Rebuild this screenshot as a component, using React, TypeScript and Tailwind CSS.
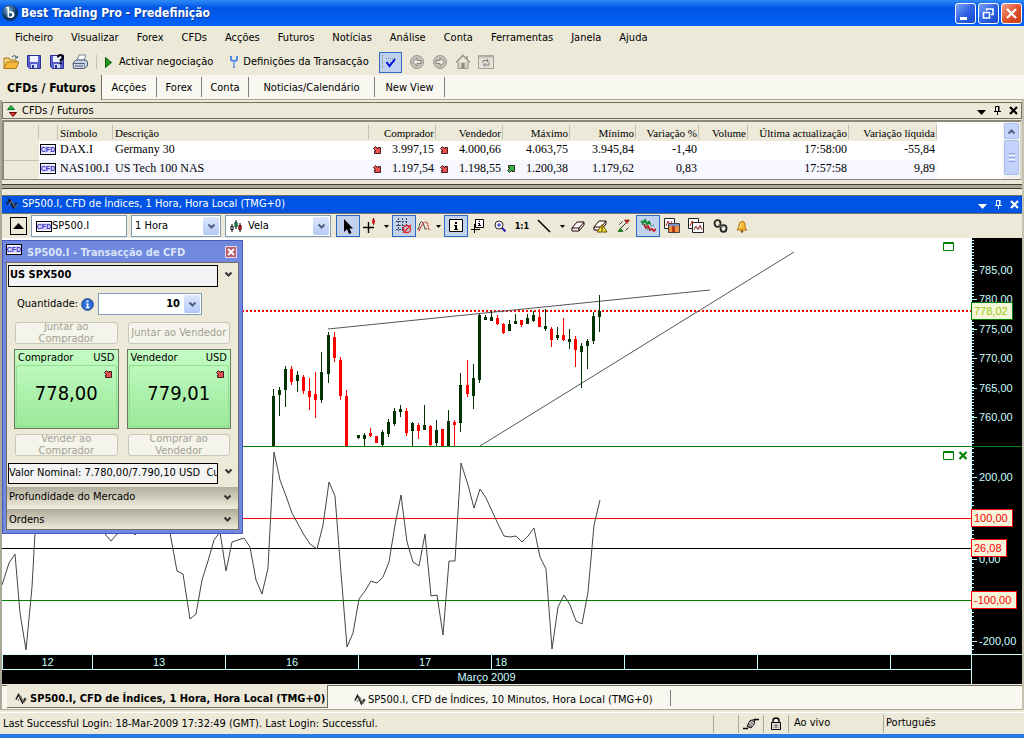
import type { ReactNode } from "react";

const MENU = ["Ficheiro", "Visualizar", "Forex", "CFDs", "Acções", "Futuros", "Notícias", "Análise", "Conta", "Ferramentas", "Janela", "Ajuda"];

const VIEWS = [
  { label: "Acções", width: "w-[55px]" },
  { label: "Forex", width: "w-[45px]" },
  { label: "Conta", width: "w-[47px]" },
  { label: "Noticias/Calendário", width: "w-[126px]" },
  { label: "New View", width: "w-[70px]" },
];

type Quote = { symbol: string; name: string; values: string[]; dirs: string[] };

const COLUMNS = [
  { label: "", width: "w-[35px]" },
  { label: "", width: "w-[19px]" },
  { label: "Símbolo", width: "w-[55px]" },
  { label: "Descrição", width: "w-[256px]" },
  { label: "Comprador", width: "w-[67px]" },
  { label: "Vendedor", width: "w-[67px]" },
  { label: "Máximo", width: "w-[67px]" },
  { label: "Mínimo", width: "w-[66px]" },
  { label: "Variação %", width: "w-[63px]" },
  { label: "Volume", width: "w-[49px]" },
  { label: "Última actualização", width: "w-[101px]" },
  { label: "Variação líquida", width: "w-[88px]" },
];

const QUOTES: Quote[] = [
  {
    symbol: "DAX.I",
    name: "Germany 30",
    values: ["3.997,15", "4.000,66", "4.063,75", "3.945,84", "-1,40", "", "17:58:00", "-55,84"],
    dirs: ["down", "down"],
  },
  {
    symbol: "NAS100.I",
    name: "US Tech 100 NAS",
    values: ["1.197,54", "1.198,55", "1.200,38", "1.179,62", "0,83", "", "17:57:58", "9,89"],
    dirs: ["down", "down", "up"],
  },
];

// x, body top, body bottom, wick top, wick bottom, rising
const CANDLES: [number, number, number, number, number, number][] = [
  [271, 158, 208, 151, 208, 1], [277, 152, 157, 149, 178, 1], [283, 131, 152, 128, 169, 1], [289, 131, 144, 128, 147, 0],
  [295, 137, 143, 133, 154, 1], [301, 139, 153, 137, 156, 0], [307, 153, 159, 140, 172, 0], [313, 156, 162, 134, 180, 0],
  [319, 134, 162, 114, 165, 1], [326, 97, 136, 94, 145, 1], [332, 99, 120, 94, 124, 0], [338, 122, 158, 119, 162, 0],
  [344, 158, 208, 152, 208, 0], [356, 197, 200, 197, 201, 1], [362, 197, 201, 195, 208, 1], [368, 195, 198, 190, 199, 0],
  [374, 198, 205, 198, 205, 0], [380, 194, 207, 192, 208, 1], [386, 184, 196, 181, 199, 1], [392, 173, 186, 170, 188, 1],
  [398, 171, 174, 167, 179, 1], [404, 173, 195, 170, 198, 0], [410, 185, 193, 184, 208, 1], [416, 187, 193, 185, 201, 0],
  [422, 187, 192, 167, 192, 1], [428, 188, 207, 187, 208, 0], [434, 192, 205, 182, 208, 1], [440, 191, 208, 191, 208, 0],
  [446, 183, 208, 172, 208, 1], [452, 184, 187, 182, 208, 0], [458, 147, 185, 135, 194, 1], [465, 147, 156, 122, 159, 0],
  [471, 140, 158, 126, 171, 1], [477, 77, 142, 76, 145, 1], [483, 79, 82, 77, 82, 1], [489, 79, 83, 73, 83, 1],
  [495, 80, 86, 77, 87, 0], [501, 86, 95, 85, 96, 0], [507, 86, 93, 82, 93, 1], [513, 83, 86, 76, 86, 1],
  [519, 82, 87, 82, 89, 0], [525, 80, 86, 76, 86, 1], [531, 77, 83, 73, 84, 1], [537, 79, 89, 71, 89, 0],
  [543, 88, 91, 71, 93, 1], [549, 91, 102, 89, 109, 0], [555, 97, 100, 89, 102, 1], [561, 97, 102, 80, 103, 0],
  [567, 101, 104, 91, 111, 1], [573, 101, 112, 98, 129, 0], [579, 108, 114, 105, 150, 1], [585, 103, 108, 101, 131, 1],
  [591, 78, 103, 74, 106, 1], [597, 73, 79, 57, 94, 1],
];

const OSCILLATOR =
  "0,138 7,116 13,107 18,166 24,203 30,140 33,86 39,60 97,74 103,87 109,94 115,87 127,80 133,88 139,80 168,86 175,124 181,127 188,172 194,167 200,133 206,114 212,93 218,85 224,124 230,95 242,91 248,100 254,133 260,147 266,121 272,5 278,33 284,49 290,66 296,77 302,88 308,97 315,102 321,78 327,35 333,49 339,126 345,200 351,186 357,152 363,144 369,134 375,136 381,130 387,115 393,78 399,48 405,95 411,115 417,119 423,87 429,149 435,148 441,188 447,114 453,114 459,16 466,38 472,61 478,42 484,51 490,64 496,77 502,89 508,90 514,89 520,95 526,89 532,81 538,110 544,122 550,202 556,160 562,148 568,158 574,174 580,177 586,145 592,78 598,53";

const DAYS = [
  { label: "12", cell: "w-[90px] justify-center" },
  { label: "13", cell: "w-[133px] justify-center" },
  { label: "16", cell: "w-[133px] justify-center" },
  { label: "17", cell: "w-[133px] justify-center" },
  { label: "18", cell: "w-[133px] pl-[3px]" },
  { label: "", cell: "w-[133px]" },
  { label: "", cell: "w-[133px]" },
  { label: "", cell: "flex-1" },
];

/* ── Small icons ── */

function Icon({ w = 16, h = 16, children }: { w?: number; h?: number; children: ReactNode }) {
  return (
    <svg width={w} height={h} viewBox={`0 0 ${w} ${h}`} className="shrink-0" aria-hidden="true">
      {children}
    </svg>
  );
}

function DirArrow({ dir }: { dir: string }) {
  return (
    <Icon w={8} h={8}>
      <g transform={dir === "up" ? "matrix(1 0 0 -1 0 8)" : undefined}>
        <path d="M.5 2.500l2-2L5 3V1.500h2.500v6h-6V5H3z" fill={dir === "up" ? "#2fbe4a" : "#f05050"} stroke="#301010" strokeWidth=".9" />
      </g>
    </Icon>
  );
}

function CfdBadge() {
  return (
    <span className="flex h-[11px] w-4 shrink-0 items-center justify-center border border-black bg-white">
      <span className="bg-[#dcdcff] font-[family-name:'Liberation_Sans',sans-serif] text-[7px] leading-[7px] font-bold text-[#3b32c8]">CFD</span>
    </span>
  );
}

function WaveIcon() {
  return (
    <Icon w={12} h={12}>
      <path d="M1 6.500L3.500 1.500l4 8.500L10.500 5" fill="none" stroke="#1a1a1a" strokeWidth="1.500" />
      <path d="M3 8l2.500-5M5.500 2.500l3.500 7L11.500 6" fill="none" stroke="#6a6a6a" strokeWidth="1" />
    </Icon>
  );
}

function Chevron({ color = "#333" }: { color?: string }) {
  return (
    <Icon w={9} h={7}>
      <path d="M1.500 1.500l3 3 3-3" fill="none" stroke={color} strokeWidth="2" />
    </Icon>
  );
}

function PanelButtons() {
  return (
    <div className="flex items-center gap-2">
      <button type="button" aria-label="Menu" className="pt-1">
        <Icon w={9} h={5}><path d="M0 0h9L4.500 5z" fill="currentColor" /></Icon>
      </button>
      <button type="button" aria-label="Fixar">
        <Icon w={7} h={9}><path d="M1.500 5V.5h3V5M5 0v5.500M0 5.500h7M3.500 6v3" fill="none" stroke="currentColor" /></Icon>
      </button>
      <button type="button" aria-label="Fechar">
        <Icon w={9} h={9}><path d="M1 1l7 7M8 1L1 8" fill="none" stroke="currentColor" strokeWidth="2.200" /></Icon>
      </button>
    </div>
  );
}

function DropArrow() {
  return (
    <span className="flex h-[18px] w-4 items-center justify-center rounded-[2px] bg-linear-to-b from-[#dde7fd] to-[#b5c9f6]">
      <Chevron color="#4d6185" />
    </span>
  );
}

/* ── Title bar ── */

function TitleBar() {
  return (
    <header className="flex h-[26px] items-center bg-linear-to-b from-[#2f8bf7] via-[#0055e5] via-30% to-[#0462fb] pr-0.5 pl-px">
      <Icon w={18} h={18}>
        <defs>
          <radialGradient id="orb" cx="40%" cy="30%">
            <stop offset="0" stopColor="#7fb0d8" />
            <stop offset="1" stopColor="#06345f" />
          </radialGradient>
        </defs>
        <circle cx="9" cy="9" r="8" fill="url(#orb)" />
        <path d="M5 3h3v4.500c3-1 5.500.3 5.500 3 0 3-3.500 4.500-7 2.500V4.500H5zM8 9v3.500c2 .4 3.300-.4 3.300-2S9.700 8.200 8 9z" fill="#fff" fillRule="evenodd" />
      </Icon>
      <h1 className="ml-0.5 flex-1 text-[12px] font-bold text-white [text-shadow:1px_1px_#0a3a9c]">Best Trading Pro - Predefinição</h1>
      <div className="flex gap-0.5">
        <button type="button" aria-label="Minimizar" className="size-[21px] rounded-[3px] border border-white bg-linear-to-br from-[#7ea2f4] via-[#2f63e6] to-[#1848c8]">
          <Icon w={19} h={19}><path d="M4 13h7v3H4z" fill="#fff" /></Icon>
        </button>
        <button type="button" aria-label="Restaurar" className="size-[21px] rounded-[3px] border border-white bg-linear-to-br from-[#7ea2f4] via-[#2f63e6] to-[#1848c8]">
          <Icon w={19} h={19}><path d="M4.500 8.500h6v5.500h-6zM4 8.500h7M7.500 6.500V5h6.500v5.500H12M7 5h7.500" fill="none" stroke="#fff" strokeWidth="1.500" /></Icon>
        </button>
        <button type="button" aria-label="Fechar janela" className="size-[21px] rounded-[3px] border border-white bg-linear-to-br from-[#f0a088] via-[#e0532e] to-[#c83a10]">
          <Icon w={19} h={19}><path d="M5 5l9 9M14 5l-9 9" stroke="#fff" strokeWidth="2.400" /></Icon>
        </button>
      </div>
    </header>
  );
}

/* ── Main toolbar ── */

function Floppy({ help }: { help?: boolean }) {
  return (
    <Icon>
      <path d="M1.500 1.500h13v13h-11l-2-2z" fill="#5a62d0" stroke="#2b3399" />
      <path d="M4 2h8v6H4z" fill="#f2f4ff" />
      <path d="M5 10h6v4H5z" fill="#d8dcf4" />
      <path d="M6 11h2v3H6z" fill="#2b3399" />
      {help && <path d="M9 3.500Q9 1 11.500 1T14 3.500Q14 5 11.700 6v1.500M11.700 8.500v1.800" fill="none" stroke="#000" strokeWidth="2" />}
    </Icon>
  );
}

function MainToolbar() {
  return (
    <div className="flex h-[25px] items-center pb-px pl-[3px]">
      <button type="button" aria-label="Abrir" className="mr-[7px]">
        <Icon>
          <path d="M1 14V4h5l1 2h6v2" fill="#f8d878" stroke="#a8751a" />
          <path d="M1 14.500L4 8h12l-3 6.500z" fill="#fbb83a" stroke="#a8751a" />
          <path d="M9 3q3-3 5 1l1-2M14 4l-2-.3" fill="none" stroke="#34506e" />
        </Icon>
      </button>
      <button type="button" aria-label="Guardar" className="mr-[7px]"><Floppy /></button>
      <button type="button" aria-label="Guardar como" className="mr-[7px]"><Floppy help /></button>
      <button type="button" aria-label="Imprimir">
        <Icon>
          <path d="M5 6l2-5h7l-2 5z" fill="#fff" stroke="#7a869a" />
          <path d="M1 9l3-3h10l1.500 2v4L12 14.500H1.500z" fill="#c9d3e2" stroke="#51607a" />
          <path d="M1.500 9.500h11M3 12h8" stroke="#51607a" />
          <path d="M12.500 9.500V14" stroke="#8492aa" />
        </Icon>
      </button>
      <span className="mx-2 h-[14px] w-px bg-[#c5c2b2]" />
      <button type="button" className="flex items-center gap-[7px]">
        <Icon w={7} h={11}><path d="M.5.500v10l6-5z" fill="#1f9a1f" stroke="#0c5a0c" /></Icon>
        Activar negociação
      </button>
      <button type="button" className="ml-4 flex items-center gap-1">
        <Icon w={10} h={12}>
          <path d="M2 0v3q0 2 3 2t3-2V0M5 5v7" fill="none" stroke="#4f86e0" strokeWidth="2" />
          <path d="M5 5.500V11" stroke="#b8d0f8" />
        </Icon>
        Definições da Transacção
      </button>
      <button type="button" aria-label="Confirmar" className="ml-2.5 flex h-[21px] w-[23px] items-center justify-center border border-[#316ac5] bg-[#c1d2ee]">
        <Icon>
          <path d="M.5 1v14M4 4.500h10M8 8h6" stroke="#7d8797" strokeDasharray="1 1" />
          <path d="M4.500 8l3 4 5.500-7" fill="none" stroke="#0010e0" strokeWidth="2" />
        </Icon>
      </button>
      <button type="button" aria-label="Anterior" className="ml-[7px]">
        <Icon>
          <circle cx="8" cy="8" r="6.500" fill="#c4c2b9" stroke="#99978d" />
          <path d="M3.500 8L8 4v2.500h4v3H8V12z" fill="#e9e7de" stroke="#77756c" strokeWidth=".8" />
        </Icon>
      </button>
      <button type="button" aria-label="Seguinte" className="ml-[7px]">
        <Icon>
          <circle cx="8" cy="8" r="6.500" fill="#c4c2b9" stroke="#99978d" />
          <path d="M12.500 8L8 4v2.500H4v3h4V12z" fill="#e9e7de" stroke="#77756c" strokeWidth=".8" />
        </Icon>
      </button>
      <button type="button" aria-label="Início" className="ml-[7px]">
        <Icon>
          <path d="M3 8v6.500h10V8" fill="#d5d3c9" stroke="#9a988e" />
          <path d="M1 8.500L8 1.500l7 7M12 2v4" fill="none" stroke="#9a988e" strokeWidth="1.600" />
          <path d="M6.500 9h3v5h-3z" fill="#8d8b81" />
        </Icon>
      </button>
      <button type="button" aria-label="Actualizar" className="ml-[7px]">
        <Icon>
          <path d="M.5 1.500h15v13H.5z" fill="#e4e2d8" stroke="#a3a197" />
          <path d="M1 2.500h14" stroke="#b6b4aa" strokeWidth="2" />
          <path d="M5 9V6.500h5M8.500 4.500l2 2-2 2M11 8v3H6M7.500 9l-2 2 2 2" fill="none" stroke="#85837a" />
        </Icon>
      </button>
    </div>
  );
}

function ViewTabs() {
  return (
    <nav className="flex h-[25px] items-stretch border-b border-[#aca899] bg-[#f8f7f0]">
      <button type="button" className="-mb-px w-[102px] border-r border-[#716f64] bg-[#ece9d8] pl-[7px] text-left text-[12px] font-bold whitespace-nowrap">CFDs / Futuros</button>
      {VIEWS.map((v) => (
        <div key={v.label} className="flex py-0.5">
          <button type="button" className={`${v.width} border-r border-[#808080] pt-0.5 text-center`}>{v.label}</button>
        </div>
      ))}
    </nav>
  );
}

/* ── Quotes panel ── */

function QuotesPanel() {
  return (
    <section>
      <div className="flex h-[17px] items-center justify-between border border-[#716f64] pr-[3px] pl-1">
        <h2 className="flex items-center gap-[5px]">
          <Icon w={10} h={12}>
            <path d="M4 .500L.5 4.500h7z" fill="#23c423" stroke="#063" />
            <path d="M6 11.500l3.500-4h-7z" fill="#e83030" stroke="#600" />
          </Icon>
          CFDs / Futuros
        </h2>
        <PanelButtons />
      </div>
      <div className="mt-px flex h-[60px] overflow-hidden border-2 border-b border-[#8a877b] border-r-[#d8d5c6] bg-white">
        <div className="flex-1 overflow-hidden font-[family-name:'Liberation_Serif',serif] text-[12px]">
          <table className="table-fixed border-collapse leading-[17px]">
            <thead>
              <tr className="h-[19px] bg-[#ece9d8] text-[11px]">
                {COLUMNS.map((c, i) => (
                  <th key={i} className={`${c.width} overflow-hidden p-0 font-normal whitespace-nowrap ${i > 3 ? "text-right" : "text-left"}`}>
                    <div className={`h-[14px] border-r border-[#c5c2b2] pr-px leading-[16px] ${i === 2 || i === 3 ? "pl-0.5" : ""}`}>{c.label}</div>
                  </th>
                ))}
              </tr>
            </thead>
            <tbody>
              {QUOTES.map((q) => (
                <tr key={q.symbol} className="h-[19px] even:bg-[#f7f7ff]">
                  <td className="border-b border-[#c5c2b2] bg-[#ece9d8] p-0" />
                  <td className="pt-0 pr-0 pb-0.5 pl-px"><CfdBadge /></td>
                  <td className="pt-0 pr-0 pb-0.5 pl-0.5 whitespace-nowrap">{q.symbol}</td>
                  <td className="pt-0 pr-0 pb-0.5 pl-0.5">{q.name}</td>
                  {q.values.map((v, i) => (
                    <td key={i} className="pt-0 pr-0.5 pb-0.5 pl-1">
                      <div className="flex items-center justify-between">
                        {q.dirs[i] ? <DirArrow dir={q.dirs[i]} /> : <span />}
                        {v}
                      </div>
                    </td>
                  ))}
                </tr>
              ))}
            </tbody>
          </table>
        </div>
        <div className="flex w-[17px] flex-col gap-px bg-[#f2f2ee] p-px">
          <button type="button" aria-label="Subir" className="flex h-4 items-center justify-center rounded-[2px] border border-[#a9bdf0] bg-[#c6d5fb]">
            <span className="rotate-180"><Chevron color="#4d6185" /></span>
          </button>
          <div className="flex h-[35px] flex-col items-center justify-center gap-px rounded-[2px] border border-[#a9bdf0] bg-[#c2d2fb]">
            <span className="h-px w-1.5 bg-[#8da6ea]" />
            <span className="h-px w-1.5 bg-[#f5f8ff]" />
            <span className="h-px w-1.5 bg-[#8da6ea]" />
            <span className="h-px w-1.5 bg-[#f5f8ff]" />
            <span className="h-px w-1.5 bg-[#8da6ea]" />
          </div>
        </div>
      </div>
      <div className="mt-1 h-[5px] border-y border-[#3f3d36] bg-[#aca899]" />
    </section>
  );
}

/* ── Chart toolbar ── */

function Tool({ label, width = "w-6", on, children }: { label: string; width?: string; on?: boolean; children: ReactNode }) {
  return (
    <button
      type="button"
      aria-label={label}
      className={`${width} flex h-[22px] shrink-0 items-center justify-center ${on ? "border border-[#316ac5] bg-[#c1d2ee]" : ""}`}
    >
      {children}
    </button>
  );
}

function Drop({ label }: { label: string }) {
  return (
    <Tool label={label} width="w-3">
      <Icon w={5} h={3}><path d="M0 0h5L2.500 3z" /></Icon>
    </Tool>
  );
}

function ChartToolbar() {
  return (
    <div className="flex h-[25px] items-center border-t border-[#716f64] pl-2">
      <button type="button" aria-label="Recolher" className="mr-1 flex h-[18px] w-[17px] items-center justify-center border border-black">
        <Icon w={11} h={6}><path d="M0 6h11L5.500 0z" /></Icon>
      </button>
      <label className="mr-1 flex h-[22px] w-24 items-center border border-[#7f9db9] bg-white pl-1">
        <CfdBadge />
        <input aria-label="Símbolo" defaultValue="SP500.I" className="w-full min-w-0 outline-none" />
      </label>
      <label className="mr-1 flex h-[22px] w-[90px] items-center border border-[#7f9db9] bg-white pr-px pl-[3px]">
        <select aria-label="Período" className="min-w-0 flex-1 appearance-none outline-none">
          <option>1 Hora</option>
        </select>
        <DropArrow />
      </label>
      <label className="mr-[5px] flex h-[22px] w-[106px] items-center border border-[#7f9db9] bg-white pr-px pl-1">
        <Icon w={12} h={14}>
          <path d="M2 5v8M6 1v9M10 4v9" stroke="#000" />
          <path d="M.9 7.500h2.200v3H.9z" fill="#fff" stroke="#000" />
          <path d="M4.900 3.500h2.200v4H4.900z" fill="#2fb02f" stroke="#043" />
          <path d="M8.900 6.500h2.200v4H8.900z" fill="#e02020" stroke="#500" />
        </Icon>
        <select aria-label="Tipo de gráfico" className="ml-1.5 min-w-0 flex-1 appearance-none outline-none">
          <option>Vela</option>
        </select>
        <DropArrow />
      </label>

      <Tool label="Cursor" on>
        <Icon><path d="M4 1v13l3-3 2 5 2.500-1-2-4.500H13z" /></Icon>
      </Tool>
      <Tool label="Mira" width="w-5">
        <Icon>
          <path d="M6.500 4v11M1 9.500h11" stroke="#000" strokeWidth="1.400" />
          <path d="M11.500 0v7" stroke="#600" />
          <path d="M10 1.500h3v4h-3z" fill="#d22" />
        </Icon>
      </Tool>
      <Drop label="Opções da mira" />
      <Tool label="Grelha" on>
        <Icon>
          <path d="M0 3.500h12M0 7.500h12M0 11.500h7M2.500 0v13M6.500 0v13M10.500 0v8" stroke="#445" strokeDasharray="2 1" />
          <circle cx="11" cy="11" r="3.500" fill="none" stroke="#e02020" strokeWidth="1.300" />
          <path d="M7 15l8-8" stroke="#e02020" strokeWidth="1.300" />
        </Icon>
      </Tool>
      <Tool label="Indicadores" width="w-4">
        <Icon w={14} h={12}>
          <path d="M0 9h1.500Q3 1.500 4.500 1.500T8 9h2" fill="none" stroke="#333" strokeWidth=".9" />
          <path d="M2 11q4-9 6.500-9t3 7l2 1" fill="none" stroke="#c22" strokeWidth="1.100" strokeDasharray="2 .6" />
        </Icon>
      </Tool>
      <Drop label="Opções dos indicadores" />
      <Tool label="Informação" on>
        <Icon>
          <path d="M1.500 1.500h13v12h-13z" fill="#fffbe8" stroke="#000" />
          <path d="M7 4h2v2H7zM6 7h3v4h1v1H6v-1h1V8H6z" />
        </Icon>
      </Tool>
      <Tool label="Informação da mira" width="w-5">
        <Icon w={14} h={14}>
          <path d="M3.500 5v9M0 10.500h9" stroke="#000" />
          <path d="M4.500.5h8v8h-8z" fill="#fff" stroke="#000" />
          <path d="M8 2h1v1H8zM7 4h2v2h1v1H7V6h1V5H7z" />
        </Icon>
      </Tool>
      <Tool label="Ampliar">
        <Icon w={12} h={12}>
          <circle cx="5" cy="5" r="4" fill="#fff" stroke="#222" />
          <path d="M3 5h4M5 3v4" stroke="#22c" />
          <path d="M8 8l3.500 3.500" stroke="#22a" strokeWidth="2" />
        </Icon>
      </Tool>
      <Tool label="Tamanho real" width="w-5"><span className="text-[9px] font-bold">1:1</span></Tool>
      <Tool label="Linha">
        <Icon><path d="M2 2l12 12" stroke="#000" strokeWidth="1.500" /></Icon>
      </Tool>
      <Drop label="Opções da linha" />
      <Tool label="Apagar" width="w-5">
        <Icon w={14} h={12}>
          <path d="M1 8l5-6h7l-5 6zM1 8v3h7V8M8 11l5-6V2" fill="#fff" stroke="#200" />
        </Icon>
      </Tool>
      <Tool label="Apagar tudo">
        <Icon w={15} h={14}>
          <path d="M1 8l5-6h7l-5 6zM1 8v3h7V8M8 11l5-6V2" fill="#fff" stroke="#200" />
          <path d="M9 5.500l5 7.500H4z" fill="#ffe93b" stroke="#665500" />
          <path d="M9 7.500v3M9 11v1.200" stroke="#000" />
        </Icon>
      </Tool>
      <Tool label="Extremos">
        <Icon w={14} h={14}>
          <path d="M4 9l5-5M2.500 5.500l3-3M8.500 11.500l3-3" stroke="#333" />
          <path d="M7.500 1h5L10 4.500z" fill="#e02020" stroke="#600" strokeWidth=".6" />
          <path d="M1 12.500h5L3.500 9z" fill="#1f9a1f" stroke="#040" strokeWidth=".6" />
        </Icon>
      </Tool>
      <Tool label="Comparar" on>
        <Icon>
          <path d="M1 3l2 2 2-3 2 4 2-2 1 2" fill="none" stroke="#0a8a2a" strokeWidth="1.800" />
          <path d="M4 6l2 4 2-2 2 4 2-1 2 2 2-2" fill="none" stroke="#c22" strokeWidth="1.800" />
          <path d="M2 6l3 1 3 5 3-1M9 3l2 5 3-1" fill="none" stroke="#163" strokeDasharray="1.500 1" />
        </Icon>
      </Tool>
      <Tool label="Modelo">
        <Icon>
          <path d="M.5.500h10v10H.5z" fill="#fff" stroke="#222" />
          <path d="M2 8l2-5 2 4 2-4" fill="none" stroke="#c22" />
          <path d="M4.500 5.500h11v9h-11z" fill="#f09040" stroke="#444" />
          <path d="M5 6h10v2H5z" fill="#7a95cc" />
          <path d="M8 8h3v6H8z" fill="#b83a20" />
        </Icon>
      </Tool>
      <Tool label="Copiar gráfico">
        <Icon>
          <path d="M.5.500h10v10H.5z" fill="#fff" stroke="#222" />
          <path d="M2 8l2-5 2 3" fill="none" stroke="#c22" />
          <path d="M4.500 4.500h11v10h-11z" fill="#fff" stroke="#222" />
          <path d="M6 12l2-4 2 3 2-4 2 5" fill="none" stroke="#b22" strokeWidth=".9" />
          <path d="M6 10l2-1 2 3 2-3 2 1" fill="none" stroke="#555" strokeWidth=".7" />
        </Icon>
      </Tool>
      <Tool label="Ligar gráficos">
        <Icon w={15} h={14}>
          <ellipse cx="4.500" cy="4.500" rx="3" ry="3.300" fill="none" stroke="#222" strokeWidth="1.800" />
          <ellipse cx="10.500" cy="9.500" rx="3" ry="3.300" fill="none" stroke="#222" strokeWidth="1.800" />
          <path d="M5 6l5 2.500" stroke="#888" />
        </Icon>
      </Tool>
      <Tool label="Alertas" width="w-5">
        <Icon w={12} h={13}>
          <path d="M1 10q2-2 2-5t3-3.500T9 5t2 5z" fill="#f5b82e" stroke="#b06f10" />
          <path d="M5 3q-1 2-1 5" fill="none" stroke="#fff2b0" />
          <circle cx="6" cy="11.500" r="1.200" fill="#8a4a10" />
        </Icon>
      </Tool>
    </div>
  );
}

/* ── Trading window ── */

function Ghost({ children }: { children: ReactNode }) {
  return (
    <button
      type="button"
      disabled
      className="flex h-[22px] items-center justify-center overflow-hidden rounded-[3px] border border-[#c9c7ba] bg-[#f5f4ea] text-center leading-[12px] text-[#a1a192]"
    >
      {children}
    </button>
  );
}

function PriceTile({ side, price }: { side: string; price: string }) {
  return (
    <button type="button" className="flex h-20 flex-col border border-[#6b7a5e] bg-linear-to-b from-[#c4fcc4] to-[#9be89b] p-px">
      <span className="flex w-full justify-between px-0.5 leading-[14px]">
        <span>{side}</span>
        <span>USD</span>
      </span>
      <span className="flex w-full flex-1 flex-col rounded-[2px] border border-[#8fe08f] pt-1">
        <span className="self-end pr-1"><DirArrow dir="down" /></span>
        <span className="self-center text-[20px] leading-[30px]">{price}</span>
      </span>
    </button>
  );
}

function TradeWindow() {
  return (
    <section className="absolute top-0.5 left-0 flex w-[241px] flex-col border border-[#4a58bf] bg-[#7088de] px-[3px] pb-[3px]">
      <div className="flex h-[21px] items-center">
        <span className="pb-1"><CfdBadge /></span>
        <h2 className="ml-[5px] flex-1 pt-0.5 font-bold text-[#d8e4f8]">SP500.I - Transacção de CFD</h2>
        <button type="button" aria-label="Fechar transacção" className="mr-0.5 flex size-3 items-center justify-center border border-[#e8d8e8] bg-[#b4606e]">
          <Icon w={8} h={8}><path d="M1 1l6 6M7 1L1 7" stroke="#fff" strokeWidth="1.800" /></Icon>
        </button>
      </div>
      <div className="border border-[#716f64] bg-[#ece9d8]">
        <div className="flex items-center pt-0.5 pl-px">
          <div className="h-[22px] w-[210px] border border-black bg-[#f4f4f4] pl-px leading-[17px] font-bold">US SPX500</div>
          <button type="button" aria-label="Mais instrumentos" className="ml-1.5 pb-1"><Chevron /></button>
        </div>
        <div className="mt-1.5 flex items-center pl-[10px]">
          <label htmlFor="qty" className="w-16">Quantidade:</label>
          <Icon w={13} h={13}>
            <circle cx="6.500" cy="6.500" r="5.800" fill="#2c6fd6" stroke="#123a80" />
            <path d="M5.500 2.500h2v1.700h-2zM5 5.500h2.500V9h1v1.200H4.800V9h1V6.500H5z" fill="#fff" />
          </Icon>
          <div className="ml-1 flex h-[22px] w-[104px] items-center border border-[#7f9db9] bg-white pr-px">
            <input id="qty" defaultValue="10" className="min-w-0 flex-1 pr-1 text-right font-bold outline-none" />
            <DropArrow />
          </div>
        </div>
        <div className="mt-[7px] grid grid-cols-2 gap-[10px] px-2">
          <Ghost>Juntar ao Comprador</Ghost>
          <Ghost>Juntar ao Vendedor</Ghost>
        </div>
        <div className="mt-[5px] grid grid-cols-2 gap-2 px-[7px]">
          <PriceTile side="Comprador" price="778,00" />
          <PriceTile side="Vendedor" price="779,01" />
        </div>
        <div className="mt-[5px] grid grid-cols-2 gap-[10px] px-2">
          <Ghost>Vender ao Comprador</Ghost>
          <Ghost>Comprar ao Vendedor</Ghost>
        </div>
        <div className="mt-[7px] flex items-center pl-px">
          <div className="h-[21px] w-[210px] overflow-hidden border border-black bg-[#f4f4f4] leading-[17px] whitespace-pre">
            {"Valor Nominal: 7.780,00/7.790,10 USD  Cu"}
          </div>
          <button type="button" aria-label="Mais detalhes" className="ml-1.5 pb-1"><Chevron /></button>
        </div>
        <button type="button" className="mt-[3px] flex h-5 w-full items-center justify-between bg-linear-to-b from-[#b3af9e] to-[#ece9d8] pr-1.5 pl-0.5">
          Profundidade do Mercado <Chevron />
        </button>
        <button type="button" className="mt-0.5 flex h-5 w-full items-center justify-between border-t border-[#aca899] bg-linear-to-b from-[#b3af9e] to-[#ece9d8] pr-1.5 pl-0.5">
          Ordens <Chevron />
        </button>
      </div>
    </section>
  );
}

/* ── Charts ── */

function PaneButtons({ closable }: { closable?: boolean }) {
  return (
    <div className="absolute top-1 right-[3px] flex gap-1 text-[#008000]">
      <button type="button" aria-label="Maximizar painel">
        <Icon w={11} h={9}><path d="M.5.500h10v8H.5zM0 1.500h11" fill="none" stroke="currentColor" /></Icon>
      </button>
      {closable ? (
        <button type="button" aria-label="Fechar painel">
          <Icon w={10} h={9}><path d="M1.500 1l7 7M8.500 1l-7 7" stroke="currentColor" strokeWidth="2.200" /></Icon>
        </button>
      ) : (
        <span className="w-[10px]" />
      )}
    </div>
  );
}

function PricePane() {
  return (
    <div className="relative h-[208px] flex-1 overflow-hidden bg-white">
      <svg className="block size-full" role="img" aria-label="Gráfico de velas SP500.I">
        <line x1="0" x2="100%" y1="73" y2="73" stroke="#f00" strokeWidth="2" strokeDasharray="2 2" />
        <path d="M326 91L708 52M478 208L792 14" stroke="#555" fill="none" />
        <g shapeRendering="crispEdges">
          {CANDLES.map(([x, top, bottom, high, low, up]) => (
            <g key={x} fill={up ? "#003300" : "#ff0000"}>
              <rect x={x} y={high} width="1" height={low - high} />
              <rect x={x - 1} y={top} width="3" height={bottom - top} />
            </g>
          ))}
        </g>
      </svg>
      <PaneButtons />
    </div>
  );
}

function OscillatorPane() {
  return (
    <div className="relative h-[207px] flex-1 overflow-hidden bg-white">
      <svg className="block size-full" role="img" aria-label="Oscilador">
        <g shapeRendering="crispEdges">
          <rect y="71" width="100%" height="1" fill="#f00" />
          <rect y="101" width="100%" height="1" fill="#000" />
          <rect y="153" width="100%" height="1" fill="#008000" />
        </g>
        <polyline points={OSCILLATOR} fill="none" stroke="#444" strokeWidth="1" />
      </svg>
      <PaneButtons closable />
    </div>
  );
}

type Label = { y: number; text: string };
type Tag = Label & { w: number; color: string; ink: string };

function Scale({ minor, labels, tags }: { minor: number[]; labels: Label[]; tags: Tag[] }) {
  return (
    <svg className="block h-full w-[51px] bg-black font-[family-name:'Liberation_Sans',sans-serif] text-[11px]">
      <g fill="#ccffff" shapeRendering="crispEdges">
        <rect width="1" height="100%" />
        {minor.map((y) => (
          <rect key={y} x="1" y={y} width="2" height="1" />
        ))}
      </g>
      {labels.map((l) => (
        <g key={l.text} fill="#ccffff">
          <rect x="1" y={l.y} width="5" height="1" />
          <text x="8" y={l.y + 4}>{l.text}</text>
        </g>
      ))}
      {tags.map((t) => (
        <g key={t.text}>
          <rect x=".5" y={t.y - 8.5} width={t.w} height="17" fill="#f5f5dc" stroke={t.color} />
          <text x="3" y={t.y + 4} fill={t.ink}>{t.text}</text>
        </g>
      ))}
    </svg>
  );
}

const PRICE_MINOR = Array.from({ length: 70 }, (_, i) => Math.round(2 + i * 2.94));
const OSC_MINOR = Array.from({ length: 50 }, (_, i) => Math.round(1 + i * 4.1));

function ChartArea() {
  return (
    <div className="relative bg-black">
      <div className="flex h-[208px]">
        <PricePane />
        <Scale
          minor={PRICE_MINOR}
          labels={[
            { y: 32, text: "785,00" },
            { y: 61, text: "780,00" },
            { y: 91, text: "775,00" },
            { y: 120, text: "770,00" },
            { y: 150, text: "765,00" },
            { y: 179, text: "760,00" },
          ]}
          tags={[{ y: 73, text: "778,02", w: 41, color: "#008000", ink: "#99cc00" }]}
        />
      </div>
      <div className="h-px bg-[#008000]" />
      <div className="flex h-[207px]">
        <OscillatorPane />
        <Scale
          minor={OSC_MINOR}
          labels={[
            { y: 30, text: "200,00" },
            { y: 112, text: "0,00" },
            { y: 194, text: "-200,00" },
          ]}
          tags={[
            { y: 71, text: "100,00", w: 41, color: "#ff0000", ink: "#ff0000" },
            { y: 101, text: "26,08", w: 35, color: "#ff0000", ink: "#ff0000" },
            { y: 153, text: "-100,00", w: 45, color: "#ff0000", ink: "#ff0000" },
          ]}
        />
      </div>
      {/* Time axis */}
      <div className="flex h-[30px] border-t border-[#ccffff] font-[family-name:'Liberation_Sans',sans-serif] text-[11px] text-[#ccffff]">
        <div className="flex flex-1 flex-col">
          <div className="flex h-[15px] border-b border-[#ccffff]">
            {DAYS.map((d, i) => (
              <div key={i} className={`${d.cell} flex items-center border-l border-[#ccffff]`}>{d.label}</div>
            ))}
          </div>
          <div className="text-center leading-[15px]">Março 2009</div>
        </div>
        <div className="w-[51px] border-l border-[#ccffff]" />
      </div>
      <TradeWindow />
    </div>
  );
}

/* ── Bottom bars ── */

function ChartTabs() {
  return (
    <nav className="mt-px flex h-[25px] items-start border-b border-[#aca899] bg-[#f8f7f0] pb-px">
      <span className="h-px w-[5px] bg-[#716f64]" />
      <button type="button" className="flex h-[23px] w-[321px] items-center gap-[3px] border-r border-b border-[#716f64] bg-[#ece9d8] pt-1.5 pl-2 font-bold whitespace-nowrap">
        <WaveIcon /> SP500.I, CFD de Índices, 1 Hora, Hora Local (TMG+0)
      </button>
      <div className="flex flex-1 border-t border-[#716f64] pt-1">
        <button type="button" className="flex h-4 w-[343px] items-center gap-0.5 border-r border-[#808080] pt-1 pl-[26px] whitespace-nowrap">
          <WaveIcon /> SP500.I, CFD de Índices, 10 Minutos, Hora Local (TMG+0)
        </button>
      </div>
    </nav>
  );
}

function StatusBar() {
  return (
    <footer className="mt-0.5 flex h-[22px] items-center border-t border-white pl-[3px]">
      <p className="flex-1">Last Successful Login: 18-Mar-2009 17:32:49 (GMT). Last Login: Successful.</p>
      <span className="h-[18px] w-[25px] border-l border-[#aca899]" />
      <span className="flex h-[18px] w-[25px] items-center justify-center border-l border-[#aca899]">
        <Icon>
          <path d="M0 12.500h5M11 3.500h5" stroke="#000" strokeWidth="1.500" />
          <path d="M4 10.500l3-6 5-1-1 5-3 3.500z" fill="#888" stroke="#111" />
          <path d="M6 6l4 4M8 5l3 3" stroke="#eee" strokeWidth=".8" />
        </Icon>
      </span>
      <span className="flex h-[18px] w-[25px] items-center justify-center border-l border-[#aca899]">
        <Icon w={12} h={13}>
          <path d="M3 6V3.500Q3 1 6 1t3 2.500V6" fill="none" stroke="#000" strokeWidth="1.400" />
          <path d="M1.500 5.500h9v7h-9z" fill="#ddd" stroke="#000" />
          <path d="M5.500 7.500h1v3h-1zM3 8.500h2M7 8.500h2M3 10.500h2M7 10.500h2" fill="#000" stroke="#888" strokeWidth=".6" />
        </Icon>
      </span>
      <span className="h-[18px] w-[95px] border-l border-[#aca899] pl-[5px]">Ao vivo</span>
      <span className="h-[18px] w-[141px] border-l border-[#aca899] pl-0.5">Português</span>
    </footer>
  );
}

export default function App() {
  return (
    <div className="flex w-full flex-col overflow-hidden bg-[#ece9d8] font-[family-name:'DejaVu_Sans_Condensed','DejaVu_Sans',sans-serif] text-[11px] leading-[16px] text-black">
      <TitleBar />
      <nav className="flex h-6 items-center gap-[18px] pl-[15px]">
        {MENU.map((m) => (
          <button key={m} type="button">{m}</button>
        ))}
      </nav>
      <MainToolbar />
      <ViewTabs />
      <main className="border-r-2 border-l-2 border-r-[#c5c2b2] border-l-[#aca899] pt-0.5">
        <QuotesPanel />
        <section className="mt-1.5">
          <div className="flex h-[18px] items-center justify-between border-t border-[#716f64] bg-[#0054e3] pr-[3px] pb-px pl-1 text-white">
            <h2 className="flex items-center gap-1"><WaveIcon /> SP500.I, CFD de Índices, 1 Hora, Hora Local (TMG+0)</h2>
            <PanelButtons />
          </div>
          <ChartToolbar />
          <ChartArea />
        </section>
        <ChartTabs />
      </main>
      <StatusBar />
      <div className="h-1 bg-[#2a7be4]" />
    </div>
  );
}
